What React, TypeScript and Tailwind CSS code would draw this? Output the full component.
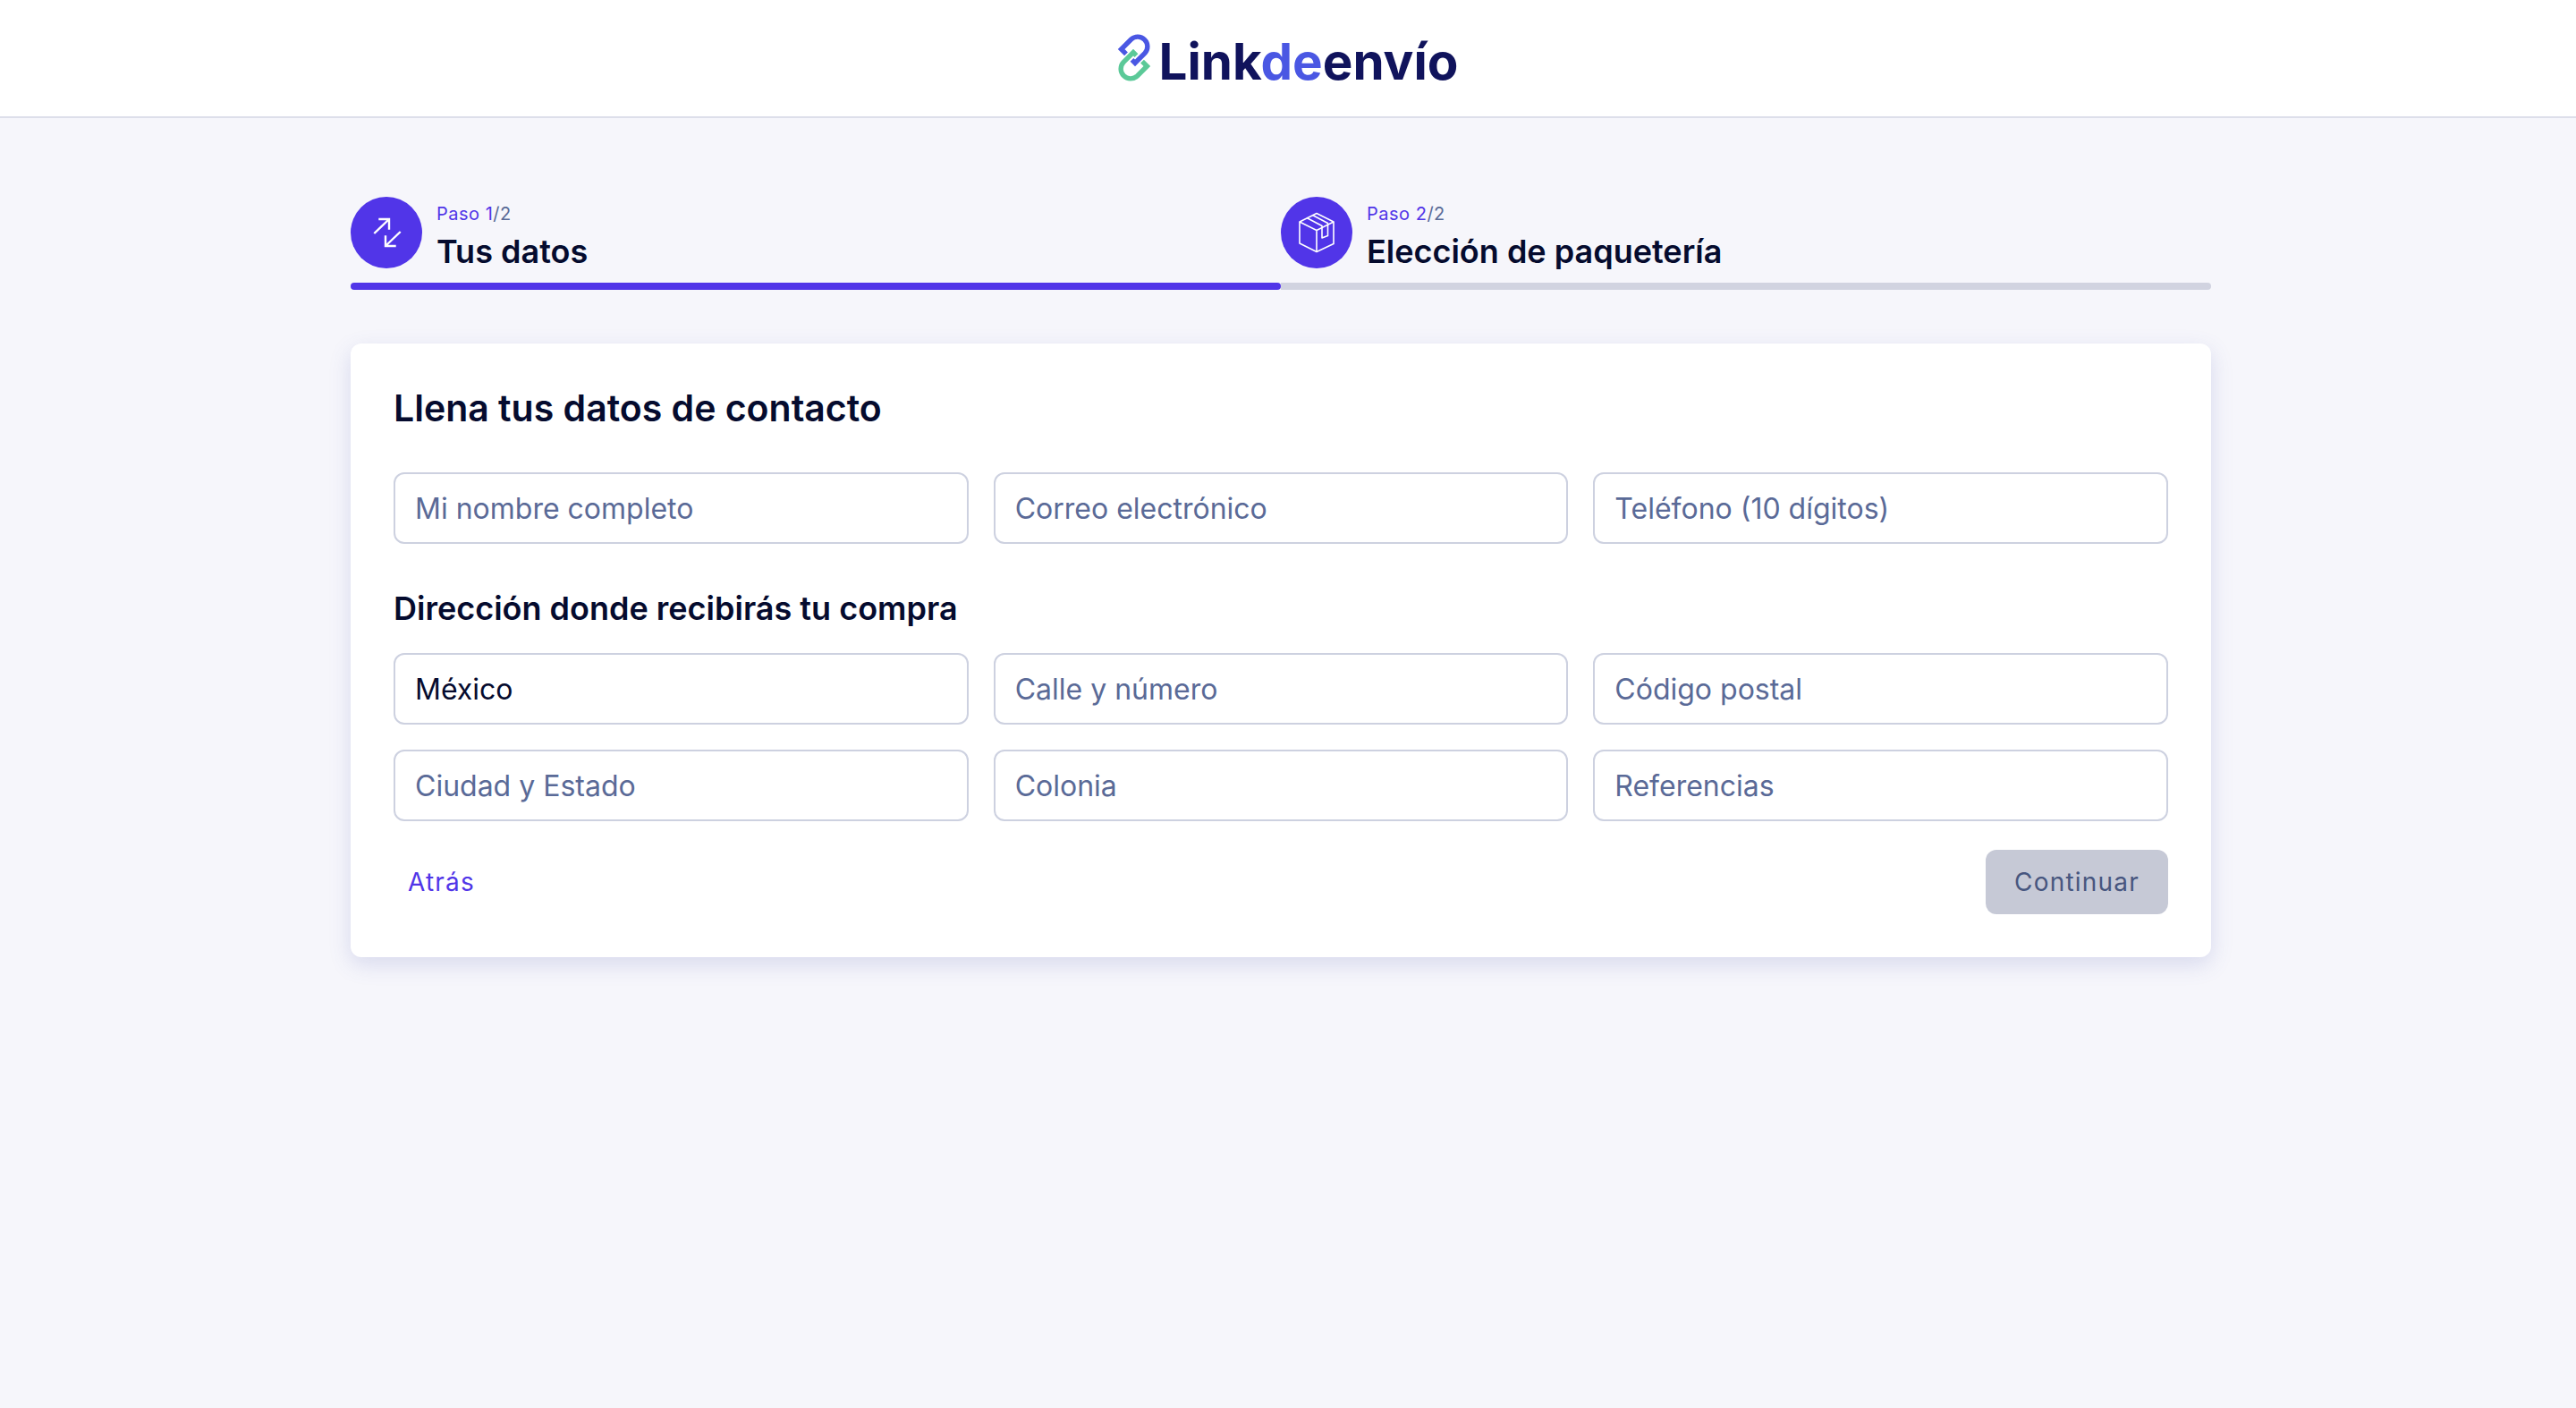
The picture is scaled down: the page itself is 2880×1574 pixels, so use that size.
import * as React from "react";

const inputClass =
    "w-full h-20 px-[22px] bg-white border-2 border-[#cdd1e0] rounded-xl text-[32px] leading-[48px] text-[#050b2e] placeholder:text-[#5a6a97] outline-none";

function Logo() {
    return (
        <svg width="36" height="52" viewBox="0 0 36 52" fill="none" strokeWidth="5.4" className="overflow-visible">
            <path d="M9 21.4L3.6 16L14.6 5A10.9 10.9 0 0 1 30 20.4L19 31.4L15.5 27.9" stroke="#4a57e3" />
            <path d="M27 29.6L32.4 35L21.4 46A10.9 10.9 0 0 1 6 30.6L17 19.6L20.5 23.1" stroke="#5bc998" />
        </svg>
    );
}

function ArrowsIcon() {
    return (
        <svg width="80" height="80" viewBox="0 0 80 80" fill="none" stroke="white" strokeWidth="2.4">
            <path d="M26.3 41L43 25M31.3 25H43V36.7" />
            <path d="M55.7 39L39 55M39 43.3V55H50.7" />
        </svg>
    );
}

function BoxIcon() {
    return (
        <svg width="80" height="80" viewBox="0 0 80 80" fill="none" stroke="white" strokeWidth="1.6" strokeLinejoin="round">
            <path d="M40 18.5L59 28V52.5L40 61.5L21 52V28L40 18.5Z" />
            <path d="M21 28L40 37.5L59 28M40 37.5V61.5" />
            <path d="M29 23.5L46 32.5V46L52.5 43.5V29.5L35.5 20.5" />
        </svg>
    );
}

function Step({ icon, paso, title, active }: { icon: React.ReactNode; paso: string; title: string; active: boolean }) {
    return (
        <div className="flex-1">
            <div className="flex items-center gap-4 h-20">
                <div className="w-20 h-20 rounded-full bg-[#5135e8] flex items-center justify-center shrink-0">{icon}</div>
                <div className="pt-2">
                    <div className="text-[20px] leading-[28px] tracking-[0.5px] mb-[6px] text-[#5a6a97]">
                        <span className="text-[#5135e8]">{paso}</span>/2
                    </div>
                    <div className="text-[36px] leading-[44px] font-semibold text-[#050b2e]">{title}</div>
                </div>
            </div>
            <div className={`mt-4 h-2 ${active ? "bg-[#5135e8] rounded-full" : "bg-[#d1d3e0] rounded-r-full"}`} />
        </div>
    );
}

export default function App() {
    return (
        <main className="min-h-[1574px] bg-[#f6f6fb] font-['Inter',sans-serif]">
            <header className="h-[132px] bg-white border-b-2 border-[#dddfea] flex items-center justify-center gap-[10px]">
                <Logo />
                <div className="mt-2 text-[56.5px] leading-[68px] font-bold text-[#10135c]">
                    Link<span className="text-[#4a57e3]">de</span>envío
                </div>
            </header>

            <div className="w-[2080px] ml-[392px] pt-[88px]">
                <div className="flex">
                    <Step icon={<ArrowsIcon />} paso="Paso 1" title="Tus datos" active />
                    <Step icon={<BoxIcon />} paso="Paso 2" title="Elección de paquetería" active={false} />
                </div>

                <section className="mt-[60px] bg-white rounded-xl shadow-[0_8px_24px_rgba(80,90,180,0.18)] p-12 h-[686px]">
                    <h1 className="text-[41px] leading-[48px] font-semibold text-[#050b2e] mb-[48px]">
                        Llena tus datos de contacto
                    </h1>
                    <div className="grid grid-cols-3 gap-7">
                        <input className={inputClass} placeholder="Mi nombre completo" />
                        <input className={inputClass} placeholder="Correo electrónico" />
                        <input className={inputClass} placeholder="Teléfono (10 dígitos)" />
                    </div>
                    <h2 className="mt-[50px] mb-[28px] text-[36px] leading-[44px] font-semibold text-[#050b2e]">
                        Dirección donde recibirás tu compra
                    </h2>
                    <div className="grid grid-cols-3 gap-7">
                        <input className={inputClass} defaultValue="México" />
                        <input className={inputClass} placeholder="Calle y número" />
                        <input className={inputClass} placeholder="Código postal" />
                        <input className={inputClass} placeholder="Ciudad y Estado" />
                        <input className={inputClass} placeholder="Colonia" />
                        <input className={inputClass} placeholder="Referencias" />
                    </div>
                    <div className="mt-8 flex items-center justify-between">
                        <button className="px-4 h-[72px] text-[28px] tracking-[1.2px] text-[#5135e8]">Atrás</button>
                        <button className="w-[204px] h-[72px] rounded-xl bg-[#c6c9d6] text-[28px] tracking-[1.2px] text-[#47567f]">
                            Continuar
                        </button>
                    </div>
                </section>
            </div>
        </main>
    );
}
